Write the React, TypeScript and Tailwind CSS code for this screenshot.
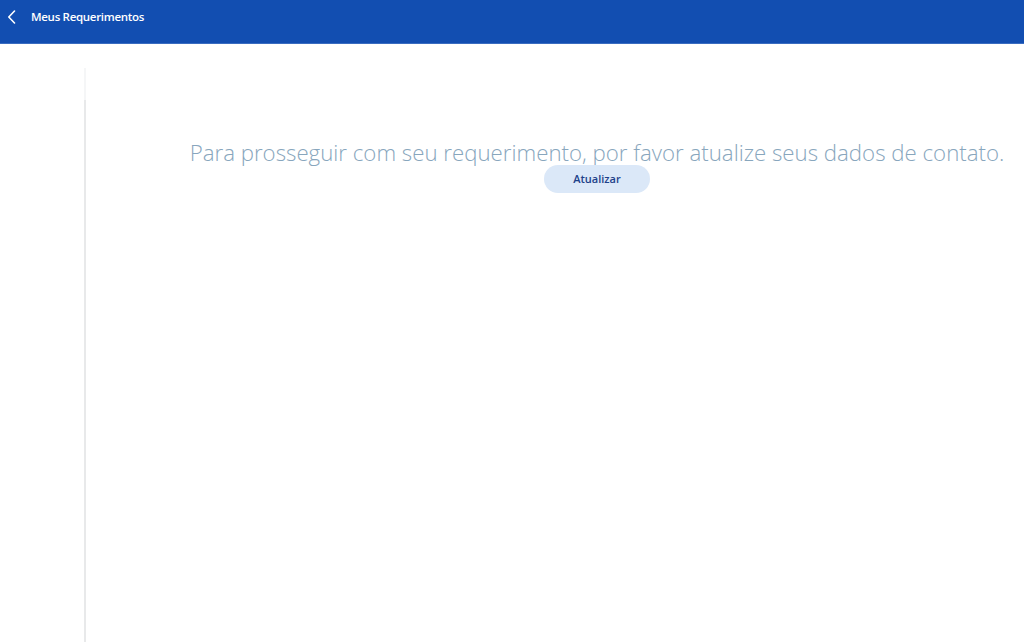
export default function App() {
  return (
    <div className="flex h-[642px] flex-col bg-white font-['Open_Sans',sans-serif]">
      <header className="flex h-[44px] shrink-0 items-start border-b border-[#3a6cc0] bg-[#124eb1] pt-[10px] text-white">
        <button className="ml-[6px] flex h-[14px] w-[10px] items-center justify-center" type="button">
          <svg width="9" height="14" viewBox="0 0 9 14" fill="none">
            <path d="M7.5 1 L1.8 7 L7.5 13" stroke="white" strokeWidth="1.6" strokeLinecap="round" strokeLinejoin="round" />
          </svg>
        </button>
        <h1 className="ml-[15px] text-[11.5px] font-semibold leading-[14px] tracking-[-0.3px]">Meus Requerimentos</h1>
      </header>

      <div className="flex min-h-0 flex-1 pt-[24px]">
        <aside className="w-[84px] shrink-0" />
        <div className="flex w-[2px] flex-col">
          <div className="h-[32px] bg-[#f5f6f7]" />
          <div className="flex-1 bg-[#e8e9ea]" />
        </div>

        <main className="flex flex-1 flex-col items-center pl-[84px] pt-[72px]">
          <p className="whitespace-nowrap text-[22.25px] font-light leading-[26px] text-[#88a6bd]">
            Para prosseguir com seu requerimento, por favor atualize seus dados de contato.
          </p>
          <button
            className="-mt-[1px] h-[28px] w-[106px] rounded-full bg-[#dbe8f8] text-[11px] font-semibold text-[#1d418a]"
            type="button"
          >
            Atualizar
          </button>
        </main>
      </div>
    </div>
  );
}
